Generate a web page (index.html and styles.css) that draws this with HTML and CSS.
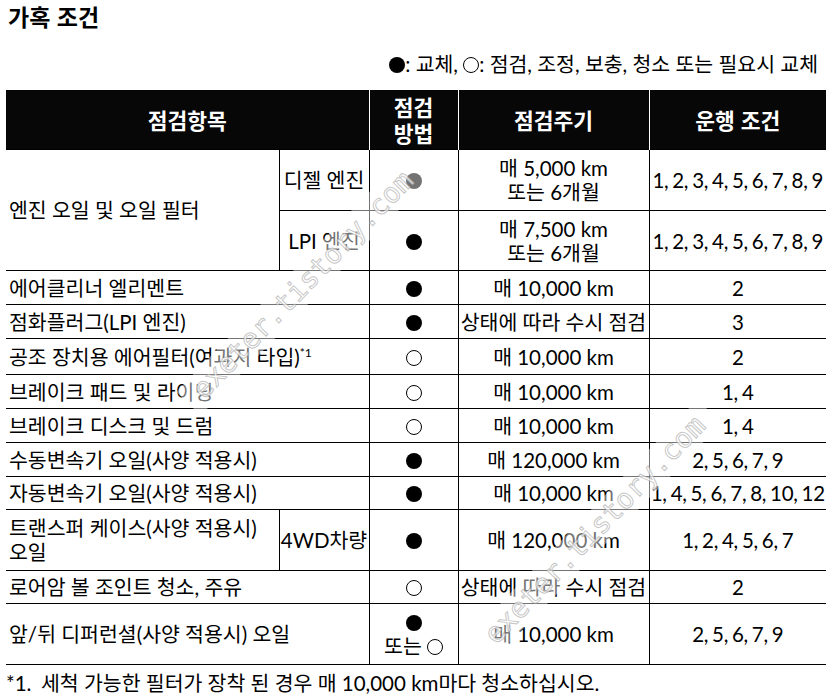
FILE: index.html
```html
<!DOCTYPE html>
<html lang="ko">
<head>
<meta charset="utf-8">
<title>가혹 조건</title>
<link rel="stylesheet" href="styles.css">
</head>
<body>
<h1 class="title">가혹 조건</h1>
<p class="legend"><span class="dot fill"></span>: 교체, <span class="dot open"></span>: 점검, 조정, 보충, 청소 또는 필요시 교체</p>
<table class="spec">
  <colgroup>
    <col class="c-item"><col class="c-sub"><col class="c-method"><col class="c-interval"><col class="c-cond">
  </colgroup>
  <thead>
    <tr>
      <th colspan="2" class="first">점검항목</th>
      <th>점검<br>방법</th>
      <th>점검주기</th>
      <th>운행 조건</th>
    </tr>
  </thead>
  <tbody>
    <tr class="h61">
      <td rowspan="2" class="item">엔진 오일 및 오일 필터</td>
      <td class="sub">디젤 엔진</td>
      <td class="mid"><span class="dot fill"></span></td>
      <td class="mid">매 5,000 km<br>또는 6개월</td>
      <td class="mid last">1, 2, 3, 4, 5, 6, 7, 8, 9</td>
    </tr>
    <tr class="h60">
      <td class="sub">LPI 엔진</td>
      <td class="mid"><span class="dot fill"></span></td>
      <td class="mid">매 7,500 km<br>또는 6개월</td>
      <td class="mid last">1, 2, 3, 4, 5, 6, 7, 8, 9</td>
    </tr>
    <tr class="h34">
      <td colspan="2" class="item">에어클리너 엘리멘트</td>
      <td class="mid"><span class="dot fill"></span></td>
      <td class="mid">매 10,000 km</td>
      <td class="mid last">2</td>
    </tr>
    <tr class="h34">
      <td colspan="2" class="item">점화플러그(LPI 엔진)</td>
      <td class="mid"><span class="dot fill"></span></td>
      <td class="mid">상태에 따라 수시 점검</td>
      <td class="mid last">3</td>
    </tr>
    <tr class="h36">
      <td colspan="2" class="item">공조 장치용 에어필터(여과지 타입)<sup class="fn">*1</sup></td>
      <td class="mid"><span class="dot open"></span></td>
      <td class="mid">매 10,000 km</td>
      <td class="mid last">2</td>
    </tr>
    <tr class="h34">
      <td colspan="2" class="item">브레이크 패드 및 라이닝</td>
      <td class="mid"><span class="dot open"></span></td>
      <td class="mid">매 10,000 km</td>
      <td class="mid last">1, 4</td>
    </tr>
    <tr class="h34">
      <td colspan="2" class="item">브레이크 디스크 및 드럼</td>
      <td class="mid"><span class="dot open"></span></td>
      <td class="mid">매 10,000 km</td>
      <td class="mid last">1, 4</td>
    </tr>
    <tr class="h34">
      <td colspan="2" class="item">수동변속기 오일(사양 적용시)</td>
      <td class="mid"><span class="dot fill"></span></td>
      <td class="mid">매 120,000 km</td>
      <td class="mid last">2, 5, 6, 7, 9</td>
    </tr>
    <tr class="h33">
      <td colspan="2" class="item">자동변속기 오일(사양 적용시)</td>
      <td class="mid"><span class="dot fill"></span></td>
      <td class="mid">매 10,000 km</td>
      <td class="mid last">1, 4, 5, 6, 7, 8, 10, 12</td>
    </tr>
    <tr class="h61">
      <td class="item">트랜스퍼 케이스(사양 적용시)<br>오일</td>
      <td class="sub">4WD차량</td>
      <td class="mid"><span class="dot fill"></span></td>
      <td class="mid">매 120,000 km</td>
      <td class="mid last">1, 2, 4, 5, 6, 7</td>
    </tr>
    <tr class="h33">
      <td colspan="2" class="item">로어암 볼 조인트 청소, 주유</td>
      <td class="mid"><span class="dot open"></span></td>
      <td class="mid">상태에 따라 수시 점검</td>
      <td class="mid last">2</td>
    </tr>
    <tr class="h61">
      <td colspan="2" class="item">앞/뒤 디퍼런셜(사양 적용시) 오일</td>
      <td class="mid"><span class="dot fill"></span><br>또는 <span class="dot open"></span></td>
      <td class="mid">매 10,000 km</td>
      <td class="mid last">2, 5, 6, 7, 9</td>
    </tr>
  </tbody>
</table>
<div class="note"><span class="note-num">*1.</span><span>세척 가능한 필터가 장착 된 경우 매 10,000 km마다 청소하십시오.</span></div>
<div class="wm wm1">exeter.tistory.com</div>
<div class="wm wm2">exeter.tistory.com</div>
</body>
</html>
```

FILE: styles.css
```css
html, body {
  margin: 0;
  background: #fff;
}
body {
  position: relative;
  width: 820px;
  height: 695px;
  padding: 0 0 0 6px;
  font-family: "Lato", "Noto Sans CJK KR", sans-serif;
  color: #000;
  overflow: hidden;
}
.title {
  margin: 0;
  padding: 0 0 0 2px;
  font-family: "Noto Sans CJK KR", sans-serif;
  font-size: 23px;
  line-height: 32px;
  font-weight: 700;
}
.legend {
  margin: 20px 0 0;
  padding-right: 8px;
  text-align: right;
  font-size: 20.5px;
  line-height: 24px;
}
.dot {
  display: inline-block;
  width: 16px;
  height: 16px;
  border-radius: 50%;
  box-sizing: border-box;
  vertical-align: -1px;
}
.dot.fill { background: #000; }
.dot.open { border: 1px solid #000; }

.spec {
  margin-top: 14px;
  width: 820px;
  border-collapse: collapse;
  table-layout: fixed;
  font-size: 20.5px;
  line-height: 24px;
}
.c-item { width: 273px; }
.c-sub { width: 90px; }
.c-method { width: 89px; }
.c-interval { width: 191px; }
.c-cond { width: 177px; }

.spec th {
  background: #070707;
  color: #fff;
  font-family: "Noto Sans CJK KR", sans-serif;
  font-weight: 700;
  font-size: 21.5px;
  line-height: 26px;
  height: 59px;
  padding: 0;
  border-left: 1px solid #fff;
  text-align: center;
}
.spec th.first { border-left: none; }

.spec td {
  padding: 0 3px;
  border: 1px solid #000;
  vertical-align: middle;
  white-space: nowrap;
}
.spec td.item { border-left: none; padding-left: 3px; }
.spec td.last {
  border-right: none;
  letter-spacing: -0.3px;
  word-spacing: -1px;
}
.spec td.sub { text-align: center; padding: 0; }
.spec td.mid { text-align: center; padding: 0; }

.h61 { height: 61px; }
.h60 { height: 60px; }
.h36 { height: 36px; }
.h34 { height: 34px; }
.h33 { height: 33px; }

.fn {
  font-size: 12px;
  line-height: 0;
  vertical-align: 8px;
}

.note {
  display: flex;
  margin-top: 6px;
  font-size: 20.5px;
  line-height: 24px;
}
.note-num { width: 35px; }

.wm {
  position: absolute;
  width: 330px;
  height: 34px;
  font-family: "DejaVu Sans Mono", monospace;
  font-size: 28px;
  line-height: 34px;
  text-align: center;
  color: rgba(255, 255, 255, 0.7);
  -webkit-text-stroke: 1px rgba(160, 160, 160, 0.6);
  background: rgba(255, 255, 255, 0.45);
  transform: rotate(-46deg);
  pointer-events: none;
}
.wm1 { left: 138px; top: 268px; }
.wm2 { left: 430px; top: 513px; }
```
